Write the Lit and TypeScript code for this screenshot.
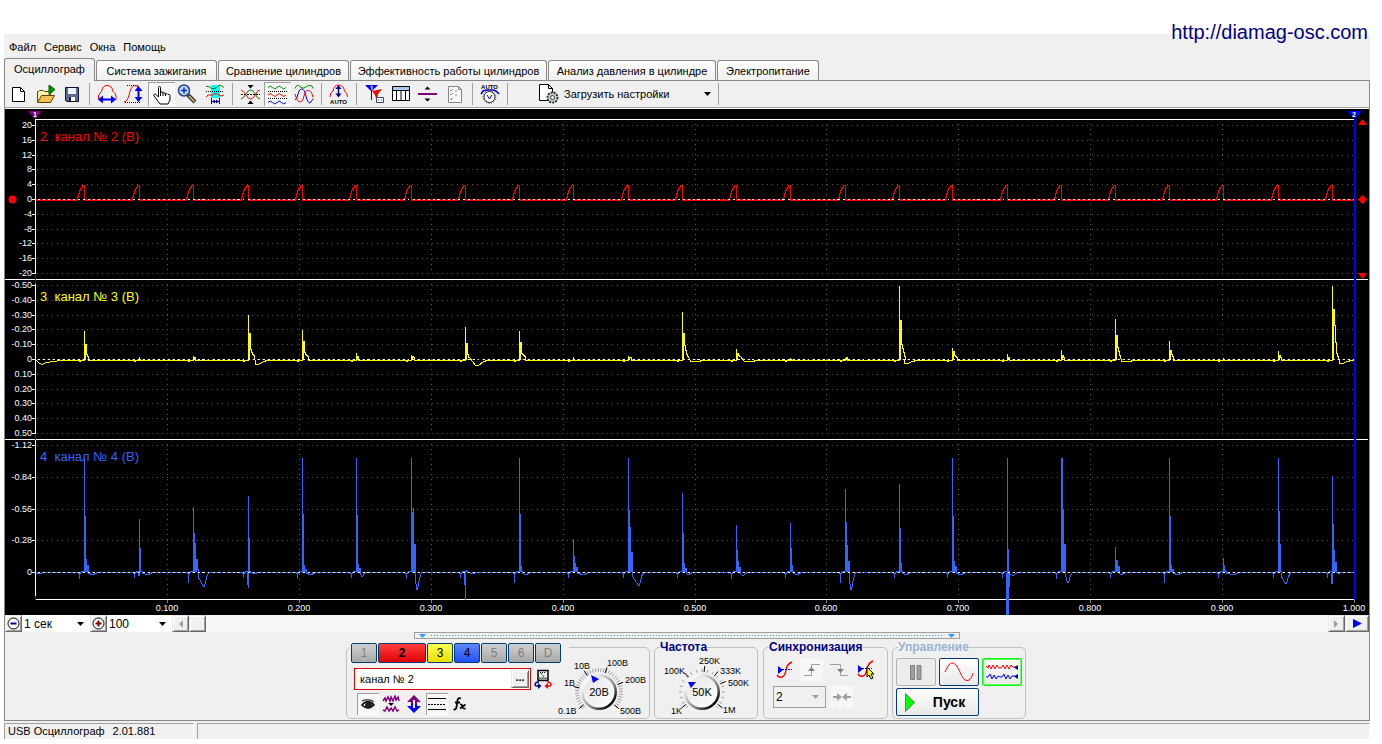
import { LitElement, html, svg, css, TemplateResult } from "lit";
import { customElement, state } from "lit/decorators.js";
import { classMap } from "lit/directives/class-map.js";

/* ---------- signal data, in plot units ---------- */

interface Pulse {
  x: number;
  secondary: number[]; // heights of channel 3, one per sample column
  dip3?: [number, number];
  primary: number[]; // heights of channel 4
  dip4?: [number, number];
  under?: number;
}

const PULSES: Pulse[] = [
  { x: 79, secondary: [29, 15, 5, 3], primary: [115, 57, 14, 7], dip4: [2, 8] },
  { x: 134, secondary: [3], primary: [54, 25, 2], dip4: [2, 8], under: 3 },
  { x: 188, secondary: [4, 2], primary: [66, 40, 30, 13, 3], dip4: [14, 10] },
  { x: 243, secondary: [45, 26, 10, 7, 5, 4], dip3: [4, 9], primary: [77, 35], dip4: [1, 6], under: 15 },
  { x: 297, secondary: [30, 18, 7, 5, 4, 3], primary: [115, 59, 8, 3], dip4: [2, 8] },
  { x: 351, secondary: [7, 3], primary: [115, 58, 9, 4], dip4: [4, 5] },
  { x: 406, secondary: [5, 3, 2], primary: [115, 61, 65, 28], dip4: [17, 5] },
  { x: 460, secondary: [33, 16, 5, 2], dip3: [5, 12], primary: [2, 3], dip4: [1, 7], under: 27 },
  { x: 514, secondary: [29, 17, 6, 5, 4, 3], primary: [115, 59, 7], dip4: [2, 6] },
  { x: 568, secondary: [3], primary: [34, 17, 10, 5], dip4: [2, 10] },
  { x: 623, secondary: [4, 2, 2], primary: [115, 63, 46, 20], dip4: [13, 10] },
  { x: 677, secondary: [48, 26, 14, 9, 5, 3], dip3: [1, 10], primary: [80, 40, 10, 4], dip4: [2, 5] },
  { x: 731, secondary: [11, 6, 4, 3], dip3: [1, 10], primary: [48, 23, 12, 5], dip4: [3, 6] },
  { x: 785, secondary: [2], primary: [50, 25, 8], dip4: [2, 6] },
  { x: 840, secondary: [2, 2], primary: [84, 51, 28, 11], dip4: [17, 5] },
  { x: 894, secondary: [74, 39, 15, 11, 7, 3], dip3: [3, 7], primary: [89, 45, 10], dip4: [2, 6] },
  { x: 947, secondary: [12, 8, 4, 3, 2], primary: [115, 57, 12, 6], dip4: [2, 8] },
  { x: 1002, secondary: [6, 2], primary: [115, 24], dip4: [3, 5], under: 42 },
  { x: 1056, secondary: [10, 4, 2], primary: [115, 115, 64, 28], dip4: [10, 6] },
  { x: 1110, secondary: [41, 24, 12, 8, 4], dip3: [1, 8], primary: [26, 13, 13, 6], dip4: [2, 5] },
  { x: 1164, secondary: [19, 9, 5, 3], primary: [115, 57, 8, 3], dip4: [2, 8] },
  { x: 1218, secondary: [2], primary: [15, 8, 3], dip4: [2, 10] },
  { x: 1273, secondary: [9, 4, 2], primary: [115, 62, 29], dip4: [11, 7] },
  { x: 1327, secondary: [74, 50, 34, 17, 6, 3], dip3: [3, 9], primary: [97, 49, 23, 10], dip4: [1, 5], under: 11 },
];

const CHANNELS = [
  {
    name: "2\u00a0 канал № 2 (В)",
    color: "#ff0000",
    top: 16,
    labels: ["20", "16", "12", "8", "4", "0", "-4", "-8", "-12", "-16", "-20"],
    ys: [16, 31, 46, 60, 75, 90, 105, 120, 134, 149, 164],
  },
  {
    name: "3\u00a0 канал № 3 (В)",
    color: "#ffff00",
    top: 176,
    labels: ["-0.50", "-0.40", "-0.30", "-0.20", "-0.10", "0", "0.10", "0.20", "0.30", "0.40", "0.50"],
    ys: [176, 191, 206, 220, 235, 250, 265, 280, 294, 309, 324],
  },
  {
    name: "4\u00a0 канал № 4 (В)",
    color: "#3366ff",
    top: 336,
    labels: ["-1.12", "-0.84", "-0.56", "-0.28", "0"],
    ys: [336, 368, 400, 431, 463],
  },
];

const TIMES = [162, 294, 426, 558, 690, 821, 953, 1085, 1217, 1349];

const redTrace = () => {
  let d = "M30 91";
  for (const { x } of PULSES) {
    d += `H${x - 7}V88h1v-4h1v-3h1v-2h1v-1h1v-2H${x}V91`;
  }
  return d + "H1349";
};

const yellowTrace = () => {
  let d = "M30 250l3 3l3 2l5 -2l7 -1l8 -1";
  for (const p of PULSES) {
    d += `H${p.x - 5}v1h1v-1H${p.x}`;
    p.secondary.forEach((h, i) => {
      d += `V${250 - h}${i === 0 ? "V250" : ""}h1`;
    });
    if (p.dip3) {
      const [depth, at] = p.dip3;
      d += `L${p.x + at - 2} ${251 + depth}h3L${p.x + at + 6} 252L${p.x + at + 10} 251`;
    } else {
      d += "V251";
    }
  }
  return d + "H1349";
};

const blueTrace = () => {
  let d = "M30 464h6v-1";
  PULSES.forEach((p, n) => {
    const pre = n % 6 === 2 ? 9 : n % 6 === 0 ? 5 : 4;
    d += `H${p.x - 6}v1h1v${pre}v-${pre}h1v-1h1v-1H${p.x}`;
    p.primary.forEach((h, i) => {
      d += `V${463 - h}${i < 3 ? "V462" : ""}h1`;
    });
    if (p.dip4) {
      const [depth, at] = p.dip4;
      const third = 463 + Math.round(depth / 3);
      d += `V${third}L${p.x + at} ${463 + depth}h1L${p.x + at + 3} ${third}L${p.x + at + 5} 463`;
    }
  });
  return d + "H1349";
};

@customElement("scope-plot")
class ScopePlot extends LitElement {
  static styles = css`
    :host { display: block; background: #000; }
    .plot { display: block; width: 100%; height: auto; font-family: "Liberation Sans", Arial, sans-serif; }
    .crisp { shape-rendering: crispEdges; }
    .grid { stroke: #5a5a5a; stroke-dasharray: 1 4; fill: none; }
    .axis { stroke: #fff; fill: none; }
    .tick { fill: #fff; font-size: 9px; text-anchor: end; }
    .time { fill: #fff; font-size: 9px; text-anchor: middle; }
    .name { font-size: 13px; }
    .flag { fill: #fff; font-size: 7px; font-weight: bold; text-anchor: middle; }
    .trace { fill: none; }
    .zero { stroke: #fff; stroke-dasharray: 2 3; fill: none; }
  `;

  render() {
    return html`<svg class="plot" viewBox="0 0 1364 506" role="img" aria-label="Осциллограмма">
      <g class="crisp">
        ${CHANNELS.map((c) => c.ys.map((y) => svg`<path class="grid" d="M32 ${y + 0.5}H1349" />`))}
        ${TIMES.slice(0, 9).map((x) => svg`<path class="grid" d="M${x + 0.5} 15V165M${x + 0.5} 175V325M${x + 0.5} 335V488" />`)}
        <path class="axis" d="M30 10.5H1349M0 170.5H1363M0 330.5H1363M30 490.5H1349M30.5 11V490" />
        <path d="M30.5 7V10M30.5 165V175M30.5 325V331M30.5 487V491" stroke="#800080" />
        ${CHANNELS.map((c) => c.ys.map((y) => svg`<path class="axis" d="M27 ${y + 0.5}H30" />`))}
        ${TIMES.map((x) => svg`<path stroke="#808080" d="M${x + 0.5} 491V494" />`)}
      </g>
      ${CHANNELS.map((c) => svg`
        ${c.ys.map((y, i) => svg`<text class="tick" x="27" y=${y + 3}>${c.labels[i]}</text>`)}
        <text class="name" x="35" y=${c.top + 16} fill=${c.color}>${c.name}</text>`)}
      <g class="crisp" transform="translate(.5 .5)">
        <path class="trace" stroke="#ff0000" d="M30 90H1349" />
        ${PULSES.map((p) => svg`<path stroke="#000" d="M${p.x - 6} 90H${p.x}" />`)}
        <path class="trace" stroke="#ff0000" d=${redTrace()} />
        <path class="trace" stroke="#ffff00" d=${yellowTrace()} />
        <path class="trace" stroke="#3366ff" d=${blueTrace()} />
        ${PULSES.filter((p) => p.under).map((p) => svg`<path stroke="#3366ff" d="M${p.x} 462V${463 + p.under!}M${p.x - 1} 463v${Math.min(12, p.under!)}" />`)}
        <path stroke="#3366ff" stroke-width="3" d="M1002 463V506" />
        <path stroke="#3366ff" d="M1004 463V477" />
        <path class="zero" d="M32 90H1349M32 250H1349M32 463H1349" />
      </g>
      <path d="M23 2h14l-7 8z" fill="#800080" />
      <path d="M1342 2h15l-7.5 8z" fill="#0000ff" />
      <path class="crisp" d="M1349.5 9V491" stroke="#0000ff" stroke-width="2" />
      <text class="flag" x="30" y="8">1</text>
      <text class="flag" x="1349" y="8">2</text>
      <circle cx="7.5" cy="90.5" r="4" fill="#ff0000" />
      <path d="M1353 16h9l-4.5 -6zM1353 90.5l4.5 -4.5l4.5 4.5l-4.5 4.5zM1353 164h9l-4.5 6z" fill="#ff0000" />
      ${TIMES.map((x, i) => svg`<text class="time" x=${x} y="502">${((i + 1) / 10).toFixed(3)}</text>`)}
    </svg>`;
  }
}

/* ---------- icons ---------- */

const tool = (body: unknown) =>
  html`<svg width="27" height="24" viewBox="0 0 27 24" fill="none" aria-hidden="true">${body}</svg>`;

const ICONS: Record<string, TemplateResult> = {
  new: tool(svg`<path d="M7.5 5.5h8l4 4v10h-12z" fill="#fff" stroke="#000" /><path d="M15.5 5.500v4h4" stroke="#000" />`),
  open: tool(svg`<path d="M5.5 20V9.5h1l1-1h4l1 1h6v4" fill="#fff0b0" stroke="#604000" />
    <path d="M5.5 20.5l4-7h13l-4 7z" fill="#f0c050" stroke="#604000" />
    <path d="M17 3l6 4.5l-6 5z" fill="#009000" stroke="#006000" />`),
  save: tool(svg`<path d="M6.5 5.5h13v14h-12l-1-1z" fill="#606890" stroke="#101030" />
    <path d="M9 6h8v6H9z" fill="#f0f4ff" /><path d="M10 15h6v4h-6z" fill="#fff" /><path d="M10 15h2v4h-2z" fill="#202040" />`),
  period: tool(svg`<path d="M4.5 18v-4q1-3 3-4.5q1-6 5.5-6q5 0 6 6q3 2 3 5v3.5" stroke="#f00" />
    <path d="M7 17.5h12" stroke="#00f" stroke-width="2" /><path d="M4 17.5l5-4v8zM22 17.5l-5-4v8z" fill="#00f" />`),
  amplitude: tool(svg`<path d="M6 3.5h12M4 20.5h16" stroke="#000" stroke-dasharray="1 1" />
    <path d="M3 20q4-1 5-7q2-9 5.5-9.5q4 0 5 4" stroke="#f00" /><path d="M17.5 6v13" stroke="#00f" stroke-width="2" />
    <path d="M17.5 4l-4 5h8zM17.5 20l-4-5h8z" fill="#00f" />`),
  hand: tool(svg`<path d="M10.5 15V5.5q0-1 1-1t1 1V11v-1q2-1 2.500 1q2-1 2.500 1q2-1 2.500.5q1.500-.5 2 1v4.500l-2 4h-8l-3-4l-3.500-5q1-1.500 2.500-.5z" fill="#fff" stroke="#000" />
    <path d="M12.5 10v4M15 11v3M17.5 12v2" stroke="#000" />`),
  zoom: tool(svg`<path d="M13 13l7 7" stroke="#303040" stroke-width="4" /><path d="M14 14l5.5 5.5" stroke="#e0c070" stroke-width="1.5" />
    <circle cx="9" cy="8.5" r="5.5" fill="#b8dcff" stroke="#304080" stroke-width="1.5" />
    <path d="M9 5.5v6M6 8.5h6" stroke="#0030c0" stroke-width="1.5" />`),
  region: tool(svg`<path d="M9 3h9v18H9z" fill="#0ff" /><path d="M4 9.5h18" stroke="#000" stroke-dasharray="1 1" />
    <path d="M4 4.5q2-1 4 1t4 1q2 0 3.5-2t3.500-1l3 2" stroke="#080" /><path d="M4 15q2-3 4-2t4-1q3-1 5 1t5 0" stroke="#f00" />
    <path d="M9 16h9v6H9z" fill="#f0f0f0" /><path d="M9.5 16v6M17.5 16v6M10 19.5h7" stroke="#000080" /><path d="M10 19.5l3-2v4zM17 19.5l-3-2v4z" fill="#000080" />`),
  cross: tool(svg`<path d="M4 12.5h19" stroke="#000" stroke-dasharray="2 1" /><path d="M4 17q3-1 5-5t4.5-4q3 0 5 4.5t4.500 4.500" stroke="#080" />
    <path d="M4 8q3 1 5 5t4.5 4q3 0 5-4.500t4.500-4.500" stroke="#f00" /><path d="M10.5 3h6l-3 3.500zM10.500 22h6l-3-3.500z" fill="#000" />`),
  waves: tool(svg`<path d="M4 5.500q2-3 4.500 0t4.500 0t4.500 0t4.500 0" stroke="#080" /><path d="M4 9.500h19M4 16.500h19" stroke="#000" stroke-dasharray="1 1" />
    <path d="M4 13q2-3 4.500 0t4.500 0t4.500 0t4.500 0" stroke="#f00" /><path d="M4 20.500q2-3 4.500 0t4.500 0t4.500 0t4.500 0" stroke="#00f" />`),
  overlay: tool(svg`<path d="M4 6.500q2-5 5-2t5 1t5-2t3 3" stroke="#080" /><path d="M4 18q2-1 3-6t3.500-5q3 0 4.500 7t4 7l3-4" stroke="#00f" />
    <path d="M4 12q2 8 5 8t4-6t4.500-5.500t4.500 7" stroke="#f00" />`),
  auto: tool(svg`<path d="M4 15q0-5 3-6q1-6 5.500-6q5 0 6 6q3 2 3 6" stroke="#f00" /><path d="M12.500 5v9" stroke="#000080" stroke-width="1.500" />
    <path d="M12.500 3l-3 4h6zM12.500 15.500l-3-4h6z" fill="#000080" /><text class="tiny" x="12.500" y="22">AUTO</text>`),
  flags: tool(svg`<path d="M4 3h13l-6 6v9h-1V9z" fill="#00f" /><path d="M11 9l10-2l-4 5l-1 8l-2-7z" fill="#f00" /><path d="M9.500 5l1.500-1v4" stroke="#fff" />
    <path d="M15.500 15.500h7v5h-7z" fill="#fff" stroke="#404080" /><path d="M17 18h1M20 18h1" stroke="#404080" />`),
  table: tool(svg`<path d="M4.500 4.500h17v14h-17z" fill="#fff" stroke="#000" /><path d="M5 5h16v3H5z" fill="#a8ccf0" /><path d="M4 8.500h18M8.500 8v11M13 8v11M17.500 8v11" stroke="#000" />`),
  line: tool(svg`<path d="M3 12h19" stroke="#800080" stroke-width="2" /><path d="M9.500 7.500h6l-3-3zM9.500 16.500h6l-3 3z" fill="#000" />`),
  list: tool(svg`<path d="M6.500 4.500h10l3 3v13h-13z" fill="#f8f8f8" stroke="#888" /><path d="M16.500 4.500v3h3M8 8l1 1l2-2M8 12l1 1l2-2M8 17l1 1l2-2M13 9h2M13 13h2" stroke="#888" />`),
  knob: tool(svg`<text class="tiny" x="12.500" y="7">AUTO</text><path d="M4 12l2-3l4-1h6l3 1l3 3" stroke="#00c" stroke-width="1.500" />
    <circle cx="12.500" cy="15" r="5.500" fill="#fff" stroke="#222" /><circle cx="12.500" cy="15" r="6.500" stroke="#555" stroke-dasharray="1 1.500" />
    <path d="M10 13l2.500 4l2.500-4" stroke="#00f" />`),
  load: tool(svg`<path d="M4.500 2.500h9l4 4v12h-13z" fill="#fff" stroke="#000" /><path d="M13.500 2.500v4h4" stroke="#000" />
    <circle cx="17.500" cy="15.500" r="5" fill="#c8dcc8" stroke="#333" stroke-width="2" stroke-dasharray="2 1" /><circle cx="17.500" cy="15.500" r="2" fill="#fff" stroke="#333" />`),
};

const TOOLBAR: { icon: string; label: string; pressed?: boolean }[][] = [
  [{ icon: "new", label: "Новый" }, { icon: "open", label: "Открыть" }, { icon: "save", label: "Сохранить" }],
  [
    { icon: "period", label: "Период" },
    { icon: "amplitude", label: "Амплитуда" },
    { icon: "hand", label: "Сдвиг", pressed: true },
    { icon: "zoom", label: "Масштаб" },
    { icon: "region", label: "Участок" },
  ],
  [{ icon: "cross", label: "Совместить" }, { icon: "waves", label: "Разнести", pressed: true }, { icon: "overlay", label: "Наложить" }],
  [{ icon: "auto", label: "Авто" }],
  [
    { icon: "flags", label: "Маркеры" },
    { icon: "table", label: "Таблица" },
    { icon: "line", label: "Линия" },
    { icon: "list", label: "Список" },
  ],
  [{ icon: "knob", label: "Автонастройка" }],
];

const TABS = [
  "Осциллограф",
  "Система зажигания",
  "Сравнение цилиндров",
  "Эффективность работы цилиндров",
  "Анализ давления в цилиндре",
  "Электропитание",
];

const arrow = (color = "#000") =>
  html`<svg class="drop" width="7" height="4" viewBox="0 0 7 4" aria-hidden="true"><path d="M0 0h7l-3.500 4z" fill=${color} /></svg>`;

interface Mark { text: string; x: number; y: number; angle: number }

const knob = (label: string, cx: number, cy: number, value: string, pointer: string, width: number, marks: Mark[], dense: boolean) => {
  const ticks: number[] = [];
  for (let a = -135; a <= 135; a += dense ? 7 : 15) ticks.push(a);
  const at = (a: number, r: number) => {
    const t = ((a - 90) * Math.PI) / 180;
    return `${(cx + r * Math.cos(t)).toFixed(1)} ${(cy + r * Math.sin(t)).toFixed(1)}`;
  };
  return html`<svg class="knob" width=${width} height="68" viewBox="0 0 ${width} 68" role="img" aria-label=${label}>
    <defs>
      <linearGradient id="rim" x1="0" y1="0" x2="1" y2="1">
        <stop offset="0.2" stop-color="#f8f8f8" /><stop offset="0.6" stop-color="#888" /><stop offset="0.85" stop-color="#000" />
      </linearGradient>
      <linearGradient id="face" x1="0" y1="0" x2="1" y2="1"><stop offset="0" stop-color="#e4e4e4" /><stop offset="1" stop-color="#fff" /></linearGradient>
    </defs>
    ${ticks.map((a) => svg`<path d="M${at(a, 20)}L${at(a, dense ? 24 : 23)}" stroke="#a0a0a0" />`)}
    ${marks.map((m) => svg`<path d="M${at(m.angle, 20)}L${at(m.angle, 26)}" stroke="#000" />`)}
    <circle cx=${cx} cy=${cy} r="18" fill="url(#rim)" /><circle cx=${cx} cy=${cy} r="15.5" fill="url(#face)" />
    <path d=${pointer} fill="#0000ff" />
    ${marks.map((m) => svg`<text class="mark" x=${m.x} y=${m.y}>${m.text}</text>`)}
    <text class="value" x=${cx} y=${cy + 4}>${value}</text>
  </svg>`;
};

@customElement("app-root")
class AppRoot extends LitElement {
  static styles = css`
    :host { display: block; background: #fff; color: #000; font: 11px/14px "Liberation Sans", Arial, sans-serif; }
    * { box-sizing: border-box; }
    button, input, select { font: inherit; color: inherit; margin: 0; padding: 0; border-radius: 0; }
    button { background: none; border: 0; display: flex; align-items: center; justify-content: center; }
    .site { display: flex; justify-content: flex-end; height: 34px; padding: 21px 14px 0 0; }
    .site a { position: relative; height: 23px; font-size: 20px; line-height: 23px; color: #000080; text-decoration: none; }
    .window { margin: 0 12px 0 4px; background: #f0f0f0; }
    .menu { display: flex; align-items: flex-start; gap: 8px; height: 24px; padding: 6px 5px 0; }
    .tabs { display: grid; grid-template-columns: 91px 121px 131px 197px 168px 102px; column-gap: 1px; align-items: end; height: 22px; }
    .tab { height: 20px; border: 1px solid #888; border-bottom: 0; border-radius: 3px 3px 0 0; background: linear-gradient(#fff, #f0f0f0); white-space: nowrap; }
    .tab.selected { position: relative; height: 23px; margin-bottom: -1px; background: #f0f0f0; padding-bottom: 2px; }
    .page { border: 1px solid #888; }
    .toolbar { display: flex; align-items: center; height: 26px; }
    .tools { display: flex; }
    .tools::after, .load::after { content: ""; width: 1px; height: 22px; margin: 1px 4px 0 3px; background: #a0a0a0; }
    .tool { width: 27px; height: 24px; }
    .pressed { background: repeating-conic-gradient(#fff 0 25%, #f0f0f0 0 50%) 0 0 / 2px 2px; box-shadow: inset 1px 1px #a0a0a0, inset -1px -1px #fff; }
    .tiny { font: bold 6px "Liberation Sans", Arial, sans-serif; fill: #000; text-anchor: middle; }
    .load { display: flex; margin-left: 23px; }
    .load button { gap: 2px; width: 180px; height: 24px; justify-content: flex-start; }
    .load .drop { margin-left: auto; margin-right: 4px; }
    .sunken { border-top: 1px solid #a0a0a0; padding-top: 1px; background: #fff; }
    .scroll { display: flex; height: 17px; background: repeating-conic-gradient(#fff 0 25%, #f0f0f0 0 50%) 0 0 / 2px 2px; }
    .bevel { width: 17px; height: 17px; background: #f0f0f0; border: 1px solid #e8e8e8; border-right-color: #696969; border-bottom-color: #696969; box-shadow: inset 1px 1px #fff, inset -1px -1px #a0a0a0; }
    .bevel.wide { width: 24px; }
    .pick { display: grid; align-items: center; background: #fff; width: 68px; }
    .pick.small { width: 65px; }
    .pick select, .pick .drop { grid-area: 1 / 1; }
    .pick select { appearance: none; border: 0; background: none; width: 100%; height: 17px; padding-left: 2px; font-size: 12px; outline: 0; }
    .pick .drop { justify-self: end; margin-right: 6px; pointer-events: none; }
    .fill { flex: 1; }
    .splitter { width: 546px; height: 7px; margin: 0 auto; border: 1px solid #a0a0a0; display: flex; align-items: center; gap: 5px; padding: 0 4px; }
    .splitter span { flex: 1; height: 1px; background: repeating-linear-gradient(90deg, #3399ff 0 1px, #f0f0f0 1px 3px); }
    .panel { display: flex; justify-content: center; gap: 4px; padding: 8px 2px 1px 0; }
    .group { height: 72px; border: 1px solid #c0c0c0; border-radius: 5px; }
    .title { display: flex; margin: -7px 0 0; font-size: 12px; line-height: 13px; font-weight: bold; color: #000080; }
    .title span { background: #f0f0f0; margin-left: 5px; }
    .title.off { color: #99b4d1; }
    .channels { display: flex; width: 304px; }
    .left { width: 210px; flex: none; }
    .channel-tabs { display: flex; gap: 1px; margin: -5px 0 0 3px; padding: 0 0 0 1px; background: #f0f0f0; width: 219px; }
    .ch { width: 26px; height: 20px; font-size: 12px; border: 1px solid #003c74; border-radius: 2px; background: linear-gradient(#d0d0d0, #a8a8a8); color: #808080; }
    .ch.c2 { width: 48px; background: linear-gradient(#ff4040, #e00000); color: #000; font-weight: bold; }
    .ch.c3 { background: linear-gradient(#ffff50, #e8e000); color: #000; }
    .ch.c4 { background: linear-gradient(#6088ff, #2050f0); color: #000; }
    .name-row { display: flex; align-items: center; gap: 3px; margin: 5px 0 0 7px; }
    .name-box { display: flex; width: 177px; height: 22px; border: 1px solid #e00000; background: #fff; padding: 1px; }
    .name-box input { flex: 1; min-width: 0; border: 0; background: none; padding-left: 4px; outline: 0; }
    .name-box .bevel { width: 18px; height: 18px; font-weight: bold; line-height: 8px; padding-bottom: 4px; }
    .modes { display: flex; gap: 1px; margin: 3px 0 0 10px; }
    .modes button { width: 22px; height: 22px; }
    .knob { display: block; flex: none; }
    .mark { font-size: 9px; }
    .value { font-size: 11px; text-anchor: middle; }
    .rate { width: 104px; }
    .rate .knob { margin-top: -1px; }
    .sync { width: 125px; margin-left: 1px; }
    .sync-row { display: flex; gap: 4px; margin: 5px 0 0 9px; }
    .sync-row button { width: 23px; height: 22px; }
    .dither { background: repeating-conic-gradient(#fff 0 25%, #f0f0f0 0 50%) 0 0 / 2px 2px; }
    .sync .pick { width: 53px; height: 22px; border: 1px solid #a0a0a0; background: #f0f0f0; }
    .control { width: 134px; }
    .actions { display: grid; grid-template-columns: repeat(3, 40px); gap: 2px 3px; margin: 4px 0 0 3px; }
    .actions button { height: 28px; border: 1px solid #003c74; border-radius: 2px; background: linear-gradient(#fff, #e8e8e8); }
    .actions .off { border-color: #b0b0b0; background: #ececec; }
    .actions .live { border-color: #00ff00; box-shadow: inset 0 0 0 1px #60ff60; }
    .actions .start { grid-column: span 2; gap: 18px; font-size: 14px; font-weight: bold; padding-right: 5px; }
    .status { display: flex; gap: 3px; padding-top: 2px; height: 18px; }
    .cell { display: flex; gap: 8px; border: 1px solid #a0a0a0; border-bottom: 0; border-right-color: #fff; padding: 0 3px; }
    .cell:first-child { width: 190px; }
    .cell:last-child { flex: 1; }
  `;

  @state() private tab = 0;

  render() {
    return html`
      <header class="site"><a href="http://diamag-osc.com">http://diamag-osc.com</a></header>
      <main class="window">
        <nav class="menu" aria-label="Меню">${["Файл", "Сервис", "Окна", "Помощь"].map((m) => html`<button>${m}</button>`)}</nav>
        <div class="tabs" role="tablist">
          ${TABS.map((t, i) => html`<button role="tab" class=${classMap({ tab: true, selected: i === this.tab })} @click=${() => (this.tab = i)}>${t}</button>`)}
        </div>
        <section class="page">
          <div class="toolbar" role="toolbar">
            ${TOOLBAR.map((g) => html`<div class="tools">
              ${g.map((b) => html`<button class=${classMap({ tool: true, pressed: !!b.pressed })} aria-label=${b.label}>${ICONS[b.icon]}</button>`)}
            </div>`)}
            <div class="load"><button>${ICONS.load}Загрузить настройки${arrow()}</button></div>
          </div>
          <div class="sunken"><scope-plot></scope-plot></div>
          ${this.scrollRow()}
          <div class="splitter">
            <svg width="7" height="4" viewBox="0 0 7 4"><path d="M0 0h7l-3.500 4z" fill="#3399ff" /></svg><span></span>
            <svg width="7" height="4" viewBox="0 0 7 4"><path d="M0 0h7l-3.500 4z" fill="#3399ff" /></svg>
          </div>
          <div class="panel">${this.channelGroup()}${this.rateGroup()}${this.syncGroup()}${this.controlGroup()}</div>
        </section>
        <footer class="status">
          <div class="cell"><span>USB Осциллограф</span><span>2.01.881</span></div>
          <div class="cell"></div>
        </footer>
      </main>`;
  }

  private scrollRow() {
    return html`<div class="scroll">
      <button class="bevel" aria-label="Сжать"><svg width="13" height="13" viewBox="0 0 13 13"><circle cx="6.500" cy="6.500" r="5.500" fill="#fff" stroke="#000" /><path d="M3.500 6.500h6" stroke="#000080" stroke-width="2" /></svg></button>
      <div class="pick"><select aria-label="Развёртка"><option>1 сек</option></select>${arrow()}</div>
      <button class="bevel" aria-label="Растянуть"><svg width="13" height="13" viewBox="0 0 13 13"><circle cx="6.500" cy="6.500" r="5.500" fill="#fff" stroke="#000" /><path d="M3.500 6.500h6M6.500 3.500v6" stroke="#800000" stroke-width="2" /></svg></button>
      <div class="pick small"><select aria-label="Масштаб, %"><option>100</option></select>${arrow()}</div>
      <button class="bevel" aria-label="Назад"><svg width="5" height="8" viewBox="0 0 5 8"><path d="M5 0v8l-4-4z" fill="#a0a0a0" /></svg></button>
      <button class="bevel" aria-label="Ползунок"></button>
      <span class="fill"></span>
      <button class="bevel" aria-label="Вперёд"><svg width="5" height="8" viewBox="0 0 5 8"><path d="M0 0v8l4-4z" fill="#a0a0a0" /></svg></button>
      <button class="bevel wide" aria-label="Воспроизвести"><svg width="9" height="9" viewBox="0 0 9 9"><path d="M0 0v9l9-4.500z" fill="#0000ff" /></svg></button>
    </div>`;
  }

  private channelGroup() {
    return html`<div class="group channels" role="group" aria-label="Каналы">
      <div class="left">
        <div class="channel-tabs">${["1", "2", "3", "4", "5", "6", "D"].map((c) => html`<button class="ch c${c}">${c}</button>`)}</div>
        <div class="name-row">
          <div class="name-box"><input aria-label="Имя канала" value="канал № 2" /><button class="bevel">...</button></div>
          <svg width="18" height="20" viewBox="0 0 18 20" fill="none">
            <path d="M4 1.500h10v10H4z" fill="#e8f0e8" stroke="#000" stroke-width="1.500" /><path d="M5 8.500h8v2H5z" fill="#708070" /><path d="M6 3.500h6M7 4l3 4" stroke="#000" stroke-dasharray="1 1" />
            <path d="M5 13q-4 0-4 3l1 1h2" stroke="#000080" stroke-width="1.500" /><path d="M4 14l3.500 3l-3.500 3z" fill="#000080" />
            <path d="M13 13q4 0 4 3l-1 1h-2" stroke="#f00" stroke-width="1.500" /><path d="M14 14l-3.500 3l3.500 3z" fill="#f00" />
          </svg>
        </div>
        <div class="modes">
          <button class="pressed" aria-label="Показать"><svg width="15" height="12" viewBox="0 0 15 12" fill="none"><path d="M1 7q6-7 12 0q-6 6-12 0z" fill="#fff" stroke="#000" stroke-width="1.500" /><circle cx="7.500" cy="7" r="3.500" fill="#222" /><path d="M1 3q7-3 12 1" stroke="#555" stroke-width="1.500" /></svg></button>
          <button aria-label="Фильтр"><svg width="18" height="18" viewBox="0 0 18 18" fill="none"><path d="M1 6l2-3l1 3l2-4l2 4l1-4l2 4l2-5l1 4l2-3l1 4M1 15l2 1l2-4l2 4l2-3l2 3l2-4l2 4l2-1" stroke="#800080" stroke-width="1.500" /><path d="M6 8h6l-3 3z" fill="#000" /></svg></button>
          <button aria-label="Сдвинуть"><svg width="16" height="18" viewBox="0 0 16 18"><path d="M8 0l7 7h-4v2H5V7H1z" fill="#800080" /><path d="M8 18l7-7h-4V9H5v2H1z" fill="#00f" /><path d="M8 5v8" stroke="#f0f0f0" stroke-width="2" /></svg></button>
          <button class="pressed" aria-label="Уровни"><svg width="18" height="14" viewBox="0 0 18 14" fill="none"><path d="M0 1.500h18M0 12.500h18" stroke="#000" /><path d="M0 7.500h18" stroke="#000" stroke-dasharray="2 1" /></svg></button>
          <button aria-label="Функция"><svg width="16" height="16" viewBox="0 0 16 16" fill="none" stroke="#000"><path d="M9 2.500q-3-1.500-3.500 2L4.500 11q-.5 3-3 2.500M3 6.500h5" stroke-width="1.800" /><path d="M8 8.500q2-.5 2.500 2t3 2M13.500 8.500l-5.500 4" stroke-width="1.800" /></svg></button>
        </div>
      </div>
      ${knob("Диапазон", 42, 44, "20В", "M34 27l8 4l-6 4z", 92, [
        { text: "0.1В", x: 1, y: 66, angle: -130 },
        { text: "1В", x: 7, y: 38, angle: -78 },
        { text: "10В", x: 17, y: 21, angle: -35 },
        { text: "100В", x: 50, y: 18, angle: 18 },
        { text: "200В", x: 68, y: 35, angle: 68 },
        { text: "500В", x: 63, y: 66, angle: 130 },
      ], true)}
    </div>`;
  }

  private rateGroup() {
    return html`<div class="group rate" role="group" aria-label="Частота">
      <h2 class="title"><span>Частота</span></h2>
      ${knob("Частота", 47, 39, "50K", "M33 29h8l-5 6z", 102, [
        { text: "1K", x: 16, y: 61, angle: -128 },
        { text: "100K", x: 9, y: 21, angle: -42 },
        { text: "250K", x: 44, y: 11, angle: 6 },
        { text: "333K", x: 65, y: 21, angle: 38 },
        { text: "500K", x: 73, y: 33, angle: 66 },
        { text: "1M", x: 68, y: 60, angle: 128 },
      ], false)}
    </div>`;
  }

  private syncGroup() {
    return html`<div class="group sync" role="group" aria-label="Синхронизация">
      <h2 class="title"><span>Синхронизация</span></h2>
      <div class="sync-row">
        <button aria-label="Уровень"><svg width="18" height="18" viewBox="0 0 18 18" fill="none"><path d="M1 14q2 3 5 2t4-7t6-8" stroke="#f00" stroke-width="1.500" /><path d="M3 8.500h13" stroke="#00f" stroke-dasharray="2 1" /><path d="M2 5v8l5-4z" fill="#00f" /></svg></button>
        <button class="dither" aria-label="Фронт"><svg width="16" height="14" viewBox="0 0 16 14" fill="none"><path d="M0 12.500h7.500v-11H16" stroke="#a0a0a0" /><path d="M4 8h7l-3.500-4z" fill="#808080" /></svg></button>
        <button aria-label="Спад"><svg width="18" height="14" viewBox="0 0 18 14" fill="none"><path d="M0 1.500h10.500v11H18" stroke="#a0a0a0" /><path d="M7 6h7l-3.500 4z" fill="#808080" /></svg></button>
        <button aria-label="Захват"><svg width="20" height="20" viewBox="0 0 20 20" fill="none"><path d="M2 14q2 3 5 2t4-7t6-8" stroke="#f00" stroke-width="1.500" /><path d="M3 8.500h13" stroke="#00f" stroke-dasharray="2 1" /><path d="M2 5v8l5-4z" fill="#00f" /><path d="M11 7l7 7h-3l2 4l-2 1l-2-4l-2 2z" fill="#ff0" stroke="#000" /></svg></button>
      </div>
      <div class="sync-row">
        <div class="pick"><select aria-label="Канал синхронизации"><option>2</option></select>${arrow("#a0a0a0")}</div>
        <button class="dither" aria-label="Сблизить"><svg width="18" height="10" viewBox="0 0 18 10"><path d="M0 4h4V1l5 4l-5 4V6H0zM18 4h-4V1L9 5l5 4V6h4z" fill="#a0a0a0" /></svg></button>
      </div>
    </div>`;
  }

  private controlGroup() {
    return html`<div class="group control" role="group" aria-label="Управление">
      <h2 class="title off"><span>Управление</span></h2>
      <div class="actions">
        <button class="off" aria-label="Пауза"><svg width="12" height="15" viewBox="0 0 12 15"><path d="M.5 .5h4v14h-4zM7 .5h4v14H7z" fill="#a0a0a0" stroke="#808080" /></svg></button>
        <button aria-label="Один кадр"><svg width="30" height="20" viewBox="0 0 30 20" fill="none"><path d="M1 10C4 3 6 1 8 1C12 1 14 6 16 10C18 15 20 18.500 23 18.500C26 18.500 28 15 29 11" stroke="#f00" /></svg></button>
        <button class="live" aria-label="Непрерывно"><svg width="34" height="20" viewBox="0 0 34 20" fill="none"><path d="M1 4l2 2l1-3l2 4l2-4l2 4l2-4l2 3l2 0l2-3l2 4l2-4l2 4l2-4l2 2h3" stroke="#f00" /><path d="M1 15h2l2-3l2 5l2-4l2 4l2-3l2 1h2l2-3l2 5l2-4l2 4l2-3h3" stroke="#00f" /><path d="M33 3v5l-4-2.500zM33 12v5l-4-2.500z" fill="#000080" /></svg></button>
        <button class="start"><svg width="10" height="19" viewBox="0 0 10 19"><path d="M.5 .5v18l9-9z" fill="#00ff00" stroke="#40a040" /></svg>Пуск</button>
      </div>
    </div>`;
  }
}
